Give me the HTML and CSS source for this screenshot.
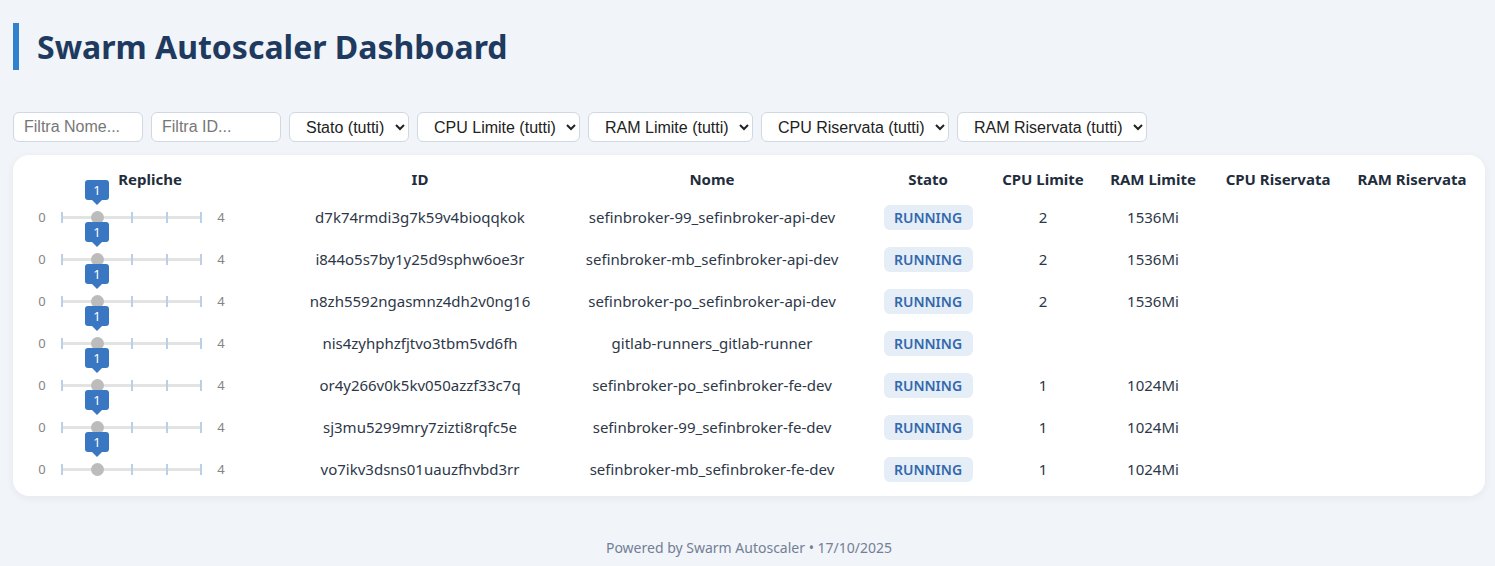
FILE: index.html
```html
<!DOCTYPE html>
<html lang="it">
<head>
<meta charset="utf-8">
<title>Swarm Autoscaler Dashboard</title>
<link rel="stylesheet" href="styles.css">
</head>
<body>
<header class="page-header">
  <h1 class="title">Swarm Autoscaler Dashboard</h1>
</header>

<div class="filters">
  <input class="filter-input" type="text" placeholder="Filtra Nome...">
  <input class="filter-input" type="text" placeholder="Filtra ID...">
  <select class="filter-select"><option>Stato (tutti)</option></select>
  <select class="filter-select"><option>CPU Limite (tutti)</option></select>
  <select class="filter-select"><option>RAM Limite (tutti)</option></select>
  <select class="filter-select"><option>CPU Riservata (tutti)</option></select>
  <select class="filter-select"><option>RAM Riservata (tutti)</option></select>
</div>

<main class="card">
  <table class="services">
    <colgroup>
      <col class="c-rep"><col class="c-id"><col class="c-name"><col class="c-state">
      <col class="c-cpul"><col class="c-raml"><col class="c-cpur"><col class="c-ramr">
    </colgroup>
    <thead>
      <tr>
        <th>Repliche</th><th>ID</th><th>Nome</th><th>Stato</th>
        <th>CPU Limite</th><th>RAM Limite</th><th>CPU Riservata</th><th>RAM Riservata</th>
      </tr>
    </thead>
    <tbody>
      <tr>
        <td><div class="slider"><span class="lim">0</span><div class="track"><i class="tick t0"></i><i class="tick t1"></i><i class="tick t2"></i><i class="tick t3"></i><i class="tick t4"></i><span class="thumb v1"></span><span class="bubble v1">1</span></div><span class="lim">4</span></div></td>
        <td>d7k74rmdi3g7k59v4bioqqkok</td><td>sefinbroker-99_sefinbroker-api-dev</td>
        <td><span class="badge">RUNNING</span></td><td>2</td><td>1536Mi</td><td></td><td></td>
      </tr>
      <tr>
        <td><div class="slider"><span class="lim">0</span><div class="track"><i class="tick t0"></i><i class="tick t1"></i><i class="tick t2"></i><i class="tick t3"></i><i class="tick t4"></i><span class="thumb v1"></span><span class="bubble v1">1</span></div><span class="lim">4</span></div></td>
        <td>i844o5s7by1y25d9sphw6oe3r</td><td>sefinbroker-mb_sefinbroker-api-dev</td>
        <td><span class="badge">RUNNING</span></td><td>2</td><td>1536Mi</td><td></td><td></td>
      </tr>
      <tr>
        <td><div class="slider"><span class="lim">0</span><div class="track"><i class="tick t0"></i><i class="tick t1"></i><i class="tick t2"></i><i class="tick t3"></i><i class="tick t4"></i><span class="thumb v1"></span><span class="bubble v1">1</span></div><span class="lim">4</span></div></td>
        <td>n8zh5592ngasmnz4dh2v0ng16</td><td>sefinbroker-po_sefinbroker-api-dev</td>
        <td><span class="badge">RUNNING</span></td><td>2</td><td>1536Mi</td><td></td><td></td>
      </tr>
      <tr>
        <td><div class="slider"><span class="lim">0</span><div class="track"><i class="tick t0"></i><i class="tick t1"></i><i class="tick t2"></i><i class="tick t3"></i><i class="tick t4"></i><span class="thumb v1"></span><span class="bubble v1">1</span></div><span class="lim">4</span></div></td>
        <td>nis4zyhphzfjtvo3tbm5vd6fh</td><td>gitlab-runners_gitlab-runner</td>
        <td><span class="badge">RUNNING</span></td><td></td><td></td><td></td><td></td>
      </tr>
      <tr>
        <td><div class="slider"><span class="lim">0</span><div class="track"><i class="tick t0"></i><i class="tick t1"></i><i class="tick t2"></i><i class="tick t3"></i><i class="tick t4"></i><span class="thumb v1"></span><span class="bubble v1">1</span></div><span class="lim">4</span></div></td>
        <td>or4y266v0k5kv050azzf33c7q</td><td>sefinbroker-po_sefinbroker-fe-dev</td>
        <td><span class="badge">RUNNING</span></td><td>1</td><td>1024Mi</td><td></td><td></td>
      </tr>
      <tr>
        <td><div class="slider"><span class="lim">0</span><div class="track"><i class="tick t0"></i><i class="tick t1"></i><i class="tick t2"></i><i class="tick t3"></i><i class="tick t4"></i><span class="thumb v1"></span><span class="bubble v1">1</span></div><span class="lim">4</span></div></td>
        <td>sj3mu5299mry7zizti8rqfc5e</td><td>sefinbroker-99_sefinbroker-fe-dev</td>
        <td><span class="badge">RUNNING</span></td><td>1</td><td>1024Mi</td><td></td><td></td>
      </tr>
      <tr>
        <td><div class="slider"><span class="lim">0</span><div class="track"><i class="tick t0"></i><i class="tick t1"></i><i class="tick t2"></i><i class="tick t3"></i><i class="tick t4"></i><span class="thumb v1"></span><span class="bubble v1">1</span></div><span class="lim">4</span></div></td>
        <td>vo7ikv3dsns01uauzfhvbd3rr</td><td>sefinbroker-mb_sefinbroker-fe-dev</td>
        <td><span class="badge">RUNNING</span></td><td>1</td><td>1024Mi</td><td></td><td></td>
      </tr>
    </tbody>
  </table>
</main>

<footer class="footer">Powered by Swarm Autoscaler • 17/10/2025</footer>
</body>
</html>
```

FILE: styles.css
```css
* { box-sizing: border-box; }

body {
  margin: 0;
  padding: 0 10px 0 13px;
  background: #f1f4f8;
  font-family: "Noto Sans", "Open Sans", sans-serif;
  color: #2d3748;
}

.page-header {
  margin-top: 23px;
}

.title {
  margin: 0;
  height: 47px;
  line-height: 47px;
  border-left: 6px solid #3182ce;
  padding-left: 18px;
  font-size: 32px;
  font-weight: 700;
  color: #1e3a5f;
}

.filters {
  display: flex;
  gap: 8px;
  margin-top: 42px;
}

.filter-input,
.filter-select {
  height: 30px;
  border: 1px solid #cfd8e3;
  border-radius: 6px;
  background: #fff;
  font-family: "Liberation Sans", Arial, sans-serif;
  font-size: 16px;
  color: #222;
}

.filter-input {
  width: 130px;
  padding: 0 10px;
}

.filter-input::placeholder { color: #777; }

.filter-select {
  padding: 0 7px 0 12px;
}

.card {
  margin-top: 13px;
  background: #fff;
  border-radius: 16px;
  box-shadow: 0 2px 8px rgba(30, 50, 90, 0.06);
  padding: 8px 0 6px 12px;
}

.services {
  width: 100%;
  table-layout: fixed;
  border-collapse: collapse;
}

.c-rep { width: 250px; }
.c-id { width: 290px; }
.c-name { width: 294px; }
.c-state { width: 138px; }
.c-cpul { width: 92px; }
.c-raml { width: 128px; }
.c-cpur { width: 122px; }
.c-ramr { width: 146px; }

.services th {
  height: 33px;
  padding: 0 0 2px;
  font-size: 15px;
  font-weight: 700;
  color: #1f2d3d;
  text-align: center;
}

.services td {
  height: 42px;
  font-size: 15px;
  text-align: center;
  padding: 0;
  color: #2d3748;
}

.slider {
  display: flex;
  align-items: center;
  gap: 12px;
  padding-left: 10px;
}

.lim {
  width: 14px;
  text-align: center;
  font-size: 13px;
  color: #858585;
}

.track {
  position: relative;
  width: 141px;
  height: 3px;
  background: #e3e3e3;
}

.tick {
  position: absolute;
  top: -4px;
  width: 2px;
  height: 11px;
  background: #b9d0e8;
}
.t0 { left: 0; }
.t1 { left: 35px; }
.t2 { left: 70px; }
.t3 { left: 105px; }
.t4 { left: 139px; }

.thumb {
  position: absolute;
  top: -5px;
  width: 13px;
  height: 13px;
  border-radius: 50%;
  background: #bcbcbc;
}
.thumb.v1 { left: 29.5px; }

.bubble {
  position: absolute;
  top: -36px;
  width: 24px;
  height: 20px;
  line-height: 20px;
  background: #3a77c3;
  border-radius: 3px;
  color: #fff;
  font-size: 13px;
  text-align: center;
}
.bubble.v1 { left: 24px; }
.bubble::after {
  content: "";
  position: absolute;
  left: 6px;
  top: 19px;
  border-left: 6px solid transparent;
  border-right: 6px solid transparent;
  border-top: 6px solid #3a77c3;
}

.badge {
  display: inline-block;
  width: 89px;
  height: 25px;
  line-height: 25px;
  border-radius: 6px;
  background: #e5edf6;
  color: #3268ad;
  font-size: 14px;
  font-weight: 600;
}

.footer {
  margin-top: 42px;
  text-align: center;
  font-size: 14px;
  line-height: 20px;
  color: #718096;
}
```
